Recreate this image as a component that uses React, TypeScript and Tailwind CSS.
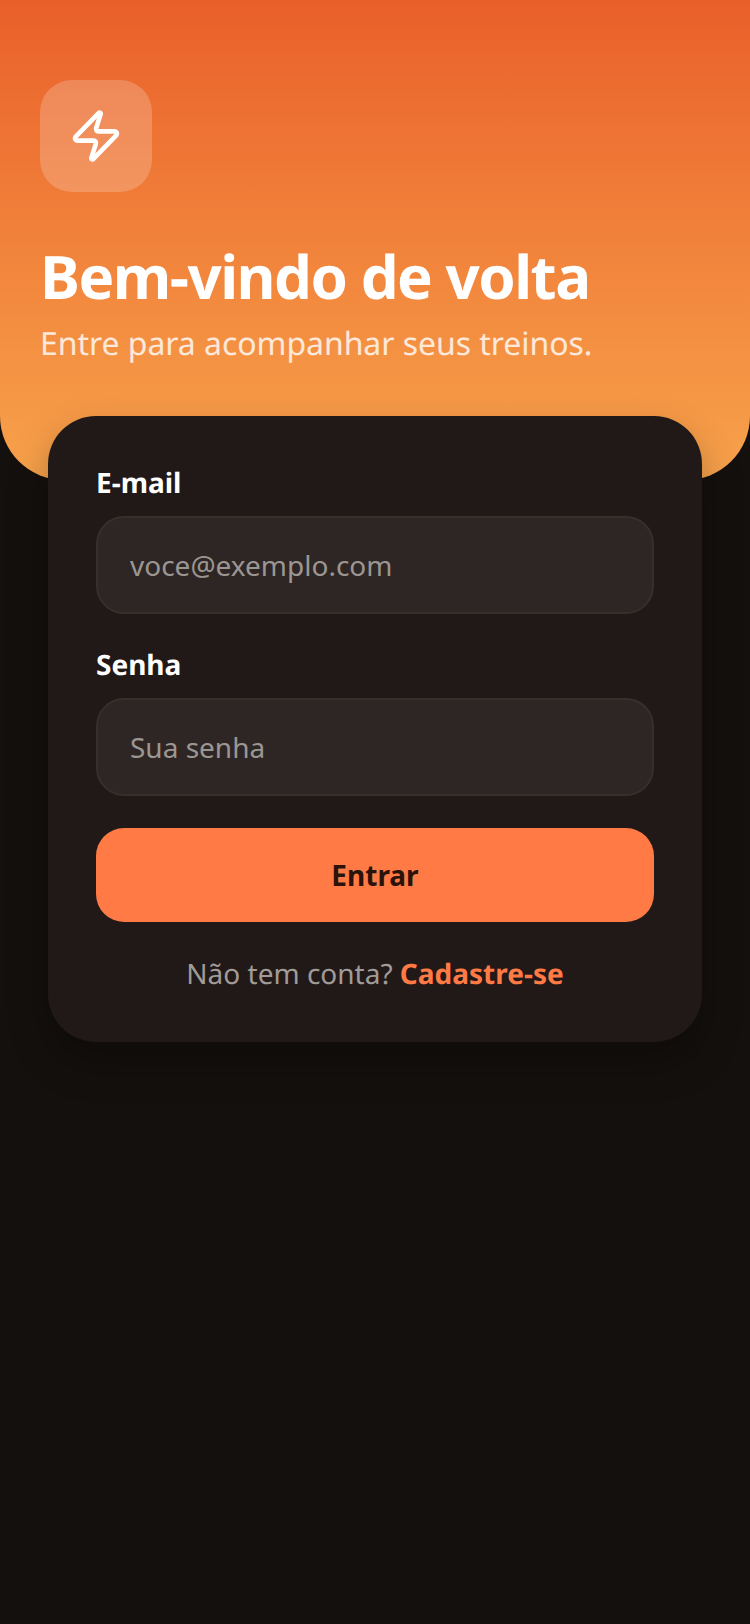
import { Zap } from "lucide-react";

function Field({ label, placeholder, type }: { label: string; placeholder: string; type: string }) {
  return (
    <label className="flex flex-col gap-[14px]">
      <span className="text-[28px] leading-[38px] font-bold text-white">{label}</span>
      <input
        type={type}
        placeholder={placeholder}
        className="h-[98px] w-full rounded-[28px] border-2 border-[#382f2d] bg-[#2e2624] px-8 text-[28px] text-white outline-none placeholder:text-[#9c9692]"
      />
    </label>
  );
}

export default function App() {
  return (
    <div className="min-h-[1624px] bg-[#14100e] font-['Noto_Sans','Open_Sans',sans-serif] [text-rendering:geometricPrecision]">
      {/* cabeçalho */}
      <div className="h-[480px] rounded-b-[64px] bg-gradient-to-b from-[#e95f2a] to-[#f7a24b] px-10 pt-20">
        <div className="flex h-[112px] w-[112px] items-center justify-center rounded-[32px] bg-white/20">
          <Zap size={56} strokeWidth={2} className="text-white" />
        </div>
        <h1 className="mt-12 text-[60px] leading-[72px] font-bold tracking-[-1.5px] text-white">Bem-vindo de volta</h1>
        <p className="mt-2 text-[32px] leading-[48px] tracking-[-0.05px] text-white/80">Entre para acompanhar seus treinos.</p>
      </div>
      {/* formulário */}
      <div className="relative mx-12 -mt-16 flex flex-col rounded-[48px] bg-[#211918] p-12 shadow-[0_20px_40px_rgba(0,0,0,0.3)]">
        <div className="flex flex-col gap-8">
          <Field label="E-mail" placeholder="voce@exemplo.com" type="email" />
          <Field label="Senha" placeholder="Sua senha" type="password" />
        </div>
        <button className="mt-8 h-[94px] w-full rounded-[28px] bg-[#ff7a45] text-[28px] font-bold text-[#2a130a]">Entrar</button>
        <p className="mt-8 text-center text-[28px] leading-[40px] text-[#a19b97]">
          Não tem conta? <span className="font-bold text-[#ff7a45]">Cadastre-se</span>
        </p>
      </div>
    </div>
  );
}
